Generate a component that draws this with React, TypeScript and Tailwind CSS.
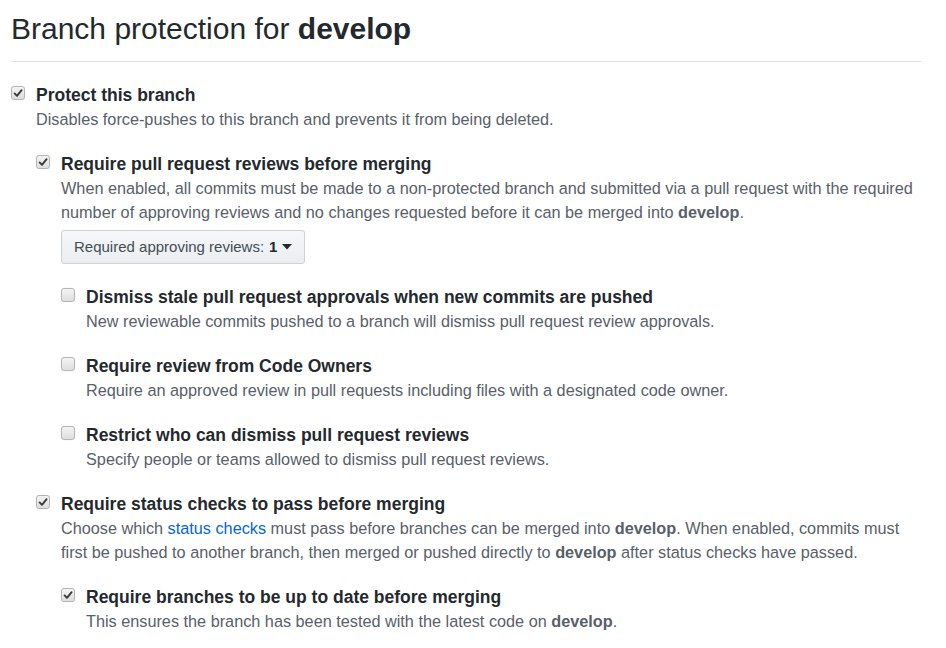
import React from "react";

const font = { fontFamily: '"Liberation Sans", Arial, sans-serif' };

function Box({ checked }: { checked: boolean }) {
  return (
    <div className="w-[25px] shrink-0 pt-[4px]">
      <div className="w-[14px] h-[14px] rounded-[3px] border border-[#b5b5b5] bg-gradient-to-b from-[#f4f4f4] to-[#dedede] shadow-[0_0_1px_rgba(0,0,0,0.15)] flex items-center justify-center">
        {checked && (
          <svg width="10" height="10" viewBox="0 0 10 10">
            <path d="M1.6 5.4 L4 7.8 L8.6 2.2" fill="none" stroke="#3a3a3a" strokeWidth="1.9" strokeLinecap="round" strokeLinejoin="round" />
          </svg>
        )}
      </div>
    </div>
  );
}

function Item({
  checked,
  title,
  children,
  sub,
}: {
  checked: boolean;
  title: string;
  children: React.ReactNode;
  sub?: React.ReactNode;
}) {
  return (
    <div className="flex mt-5">
      <Box checked={checked} />
      <div className="flex-1 min-w-0">
        <div className="text-[17.5px] leading-6 pt-[1px] font-bold text-[#24292e]">{title}</div>
        <div className="text-[16.25px] leading-6 text-[#586069]">{children}</div>
        {sub}
      </div>
    </div>
  );
}

const B = ({ children }: { children: React.ReactNode }) => (
  <b className="font-bold">{children}</b>
);

export default function App() {
  return (
    <div className="bg-white min-h-[648px] w-[946px]" style={font}>
      <div className="ml-[11px] w-[911px] pt-[11px]">
        <div className="border-b border-[#e1e4e8] pb-[14px]">
          <h1 className="text-[30px] leading-[36px] font-normal text-[#24292e]">
            Branch protection for <span className="font-bold">develop</span>
          </h1>
        </div>
        <div className="mt-[3px]">
          <Item
            checked
            title="Protect this branch"
            sub={
              <div>
                <Item
                  checked
                  title="Require pull request reviews before merging"
                  sub={
                    <div>
                      <div className="mt-[6px]">
                        <button className="h-[34px] px-[12px] rounded-[3px] border border-[#cfd1d3] bg-gradient-to-b from-[#f5f7f9] to-[#eaeef2] text-[15px] text-[#24292e] flex items-center">
                          <span className="text-[#444d56]">Required approving reviews:</span>
                          <span className="font-bold ml-[5px]">1</span>
                          <svg width="10" height="6" viewBox="0 0 10 6" className="ml-[5px]">
                            <path d="M0 0 L10 0 L5 5.5 Z" fill="#24292e" />
                          </svg>
                        </button>
                      </div>
                      <Item checked={false} title="Dismiss stale pull request approvals when new commits are pushed">
                        New reviewable commits pushed to a branch will dismiss pull request review approvals.
                      </Item>
                      <Item checked={false} title="Require review from Code Owners">
                        Require an approved review in pull requests including files with a designated code owner.
                      </Item>
                      <Item checked={false} title="Restrict who can dismiss pull request reviews">
                        Specify people or teams allowed to dismiss pull request reviews.
                      </Item>
                    </div>
                  }
                >
                  When enabled, all commits must be made to a non-protected branch and submitted via a pull request with the required number of approving reviews and no changes requested before it can be merged into <B>develop</B>.
                </Item>
                <Item
                  checked
                  title="Require status checks to pass before merging"
                  sub={
                    <Item checked title="Require branches to be up to date before merging">
                      This ensures the branch has been tested with the latest code on <B>develop</B>.
                    </Item>
                  }
                >
                  Choose which <span className="text-[#0366d6]">status checks</span> must pass before branches can be merged into <B>develop</B>. When enabled, commits must first be pushed to another branch, then merged or pushed directly to <B>develop</B> after status checks have passed.
                </Item>
              </div>
            }
          >
            Disables force-pushes to this branch and prevents it from being deleted.
          </Item>
        </div>
      </div>
    </div>
  );
}
